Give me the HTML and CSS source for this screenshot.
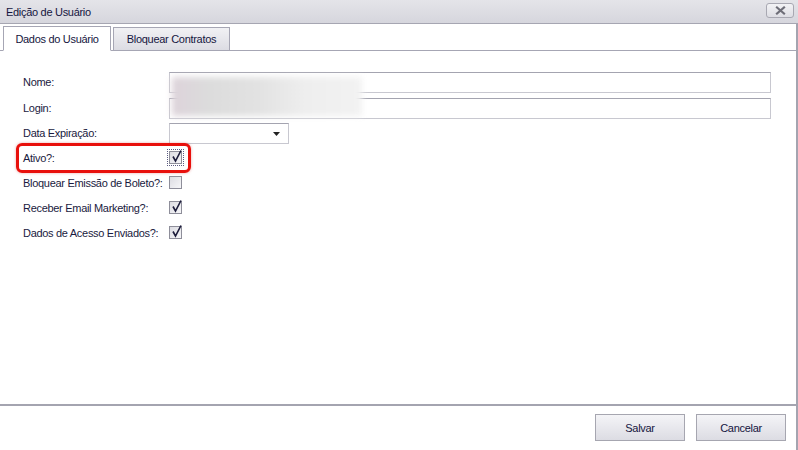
FILE: index.html
```html
<!DOCTYPE html>
<html lang="pt">
<head>
<meta charset="utf-8">
<title>Edição de Usuário</title>
<link rel="stylesheet" href="styles.css">
</head>
<body>
<div class="window">
  <div class="titlebar">
    <span class="title">Edição de Usuário</span>
    <button class="close" type="button" aria-label="Fechar">
      <svg width="11" height="9" viewBox="0 0 11 9"><path d="M2 1.5 L9 7.5 M9 1.5 L2 7.5" stroke="#6e6e78" stroke-width="2.2" stroke-linecap="square"/></svg>
    </button>
  </div>
  <div class="tabs">
    <div class="tab active">Dados do Usuário</div>
    <div class="tab">Bloquear Contratos</div>
  </div>
  <div class="content">
    <div class="form">
      <label class="lbl">Nome:</label>
      <div class="ctl"><div class="input"></div></div>
      <label class="lbl">Login:</label>
      <div class="ctl"><div class="input"></div></div>
      <label class="lbl">Data Expiração:</label>
      <div class="ctl"><div class="input date"><svg class="arrow" width="7" height="4" viewBox="0 0 7 4"><path d="M0 0 H7 L3.5 4 Z" fill="#222"/></svg></div></div>
      <label class="lbl">Ativo?:</label>
      <div class="ctl"><span class="cb checked focus"><svg width="13" height="13" viewBox="0 0 13 13"><path d="M3 6.5 L5.5 11 L11 0.5" fill="none" stroke="#1b1b3a" stroke-width="1.6"/></svg></span></div>
      <label class="lbl">Bloquear Emissão de Boleto?:</label>
      <div class="ctl"><span class="cb"></span></div>
      <label class="lbl">Receber Email Marketing?:</label>
      <div class="ctl"><span class="cb checked"><svg width="13" height="13" viewBox="0 0 13 13"><path d="M3 6.5 L5.5 11 L11 0.5" fill="none" stroke="#1b1b3a" stroke-width="1.6"/></svg></span></div>
      <label class="lbl">Dados de Acesso Enviados?:</label>
      <div class="ctl"><span class="cb checked"><svg width="13" height="13" viewBox="0 0 13 13"><path d="M3 6.5 L5.5 11 L11 0.5" fill="none" stroke="#1b1b3a" stroke-width="1.6"/></svg></span></div>
    </div>
    <div class="blur"></div>
    <div class="highlight"></div>
  </div>
  <div class="footer">
    <button class="btn" type="button">Salvar</button>
    <button class="btn" type="button">Cancelar</button>
  </div>
</div>
</body>
</html>
```
FILE: styles.css
```css
* { box-sizing: border-box; }
html, body { margin: 0; padding: 0; background: #fff; }
body {
  width: 798px;
  height: 450px;
  overflow: hidden;
  font-family: Tahoma, "Liberation Sans", "DejaVu Sans", sans-serif;
  font-size: 11px;
  letter-spacing: -0.3px;
  color: #1a1a40;
}
.window {
  width: 798px;
  height: 450px;
  display: flex;
  flex-direction: column;
  border-right: 2px solid #a4a4b0;
}
.titlebar {
  height: 24px;
  flex: none;
  display: flex;
  align-items: center;
  justify-content: space-between;
  padding: 0 4px 0 6px;
  background: linear-gradient(#e4e4e9, #d6d6dd);
  border-bottom: 1px solid #a6a6b2;
  margin-right: -2px;
}
.title { color: #151540; }
.close {
  width: 28px;
  height: 15px;
  margin-top: -2px;
  padding: 0;
  border: 1px solid #a8a8b2;
  border-radius: 3px;
  background: linear-gradient(#f2f2f5, #dedee4);
  display: flex;
  align-items: center;
  justify-content: center;
}
.tabs {
  height: 27px;
  flex: none;
  display: flex;
  align-items: flex-end;
  gap: 2px;
  padding-left: 3px;
  border-bottom: 1px solid #a6a6b4;
}
.tab {
  height: 24px;
  margin-bottom: -1px;
  padding: 0;
  display: flex;
  align-items: center;
  justify-content: center;
  white-space: nowrap;
  border: 1px solid #a6a6b4;
  background: linear-gradient(#f1f1f4, #dcdce3);
  color: #151540;
  width: 117px;
}
.tab.active {
  height: 25px;
  width: 108px;
  background: #fff;
  border-bottom-color: #fff;
  padding-top: 1px;
}
.content {
  flex: 1;
  position: relative;
  padding: 18px 25px 0 23px;
}
.form {
  display: grid;
  grid-template-columns: 146px 1fr;
  grid-template-rows: 26px 26px 24px 25px 25px 25px 25px;
  align-items: center;
}
.lbl { color: #1a1a40; white-space: nowrap; }
.ctl { display: flex; align-items: center; }
.input {
  width: 100%;
  height: 21px;
  border: 1px solid #c8c8d0;
  border-top-color: #a4a4b0;
  background: #fff;
}
.input.date {
  width: 120px;
  position: relative;
}
.arrow { position: absolute; right: 8px; top: 8px; }
.cb {
  width: 13px;
  height: 13px;
  border: 1px solid #8e8e9a;
  background: linear-gradient(135deg, #dcdce2, #f6f6f8);
  position: relative;
  display: block;
}
.cb svg { position: absolute; left: 0; top: -2px; }
.cb.focus { outline: 1px dotted #5a5a80; outline-offset: 1px; }
.blur {
  position: absolute;
  left: 172px;
  top: 26px;
  width: 190px;
  height: 39px;
  background: linear-gradient(90deg, #ddd3da 0%, #dcdcdc 20%, #e2e2e2 45%, #eeeeee 70%, #f2f2f2 100%);
  filter: blur(3px);
}
.highlight {
  position: absolute;
  left: 16px;
  top: 92px;
  width: 175px;
  height: 30px;
  border: 3px solid #e8100c;
  border-radius: 6px;
  box-shadow: 0 0 3px rgba(200,0,0,0.35);
}
.footer {
  height: 46px;
  flex: none;
  border-top: 2px solid #a4a4b0;
  display: flex;
  justify-content: flex-end;
  align-items: flex-start;
  gap: 11px;
  padding: 8px 10px 0 0;
}
.btn {
  width: 90px;
  height: 27px;
  border: 1px solid #a6a6b0;
  background: linear-gradient(#f4f4f7, #dcdce3);
  font-family: inherit;
  font-size: 11px;
  letter-spacing: -0.3px;
  color: #151540;
  padding: 0;
}
```
